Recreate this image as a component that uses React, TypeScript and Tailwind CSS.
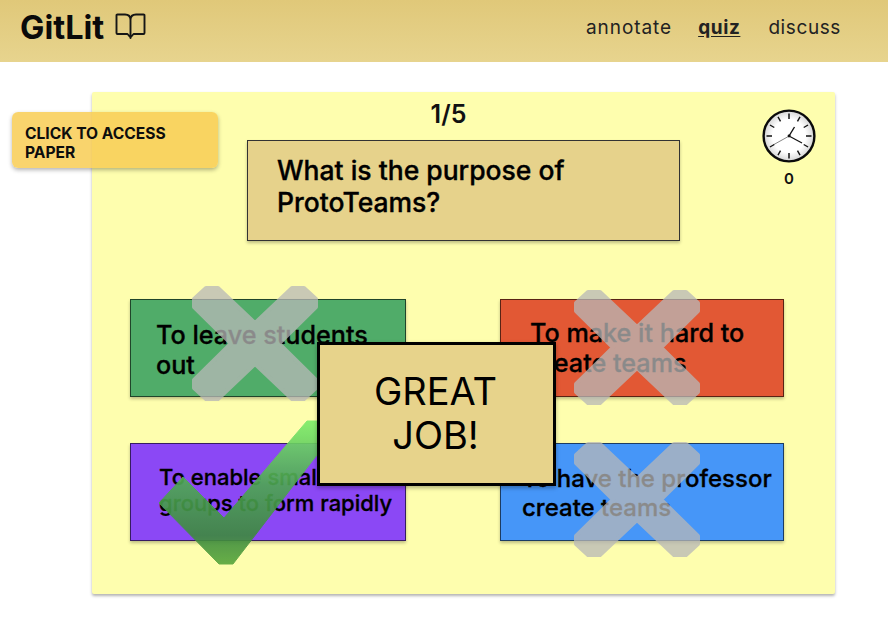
const inter = "font-['Inter','Liberation_Sans',sans-serif]";

function CrossMark({ className }: { className: string }) {
  return (
    <svg className={className} width="126" height="115" viewBox="0 0 126 115" aria-hidden="true">
      <path
        d="M2 13 L14 2 H26 L63 37 L100 2 H112 L124 13 V21 L87 57.5 L124 94 V102 L112 113 H100 L63 78 L26 113 H14 L2 102 V94 L39 57.5 L2 21 Z"
        fill="#b8b8b8"
        stroke="#b8b8b8"
        strokeWidth="4"
        strokeLinejoin="round"
      />
    </svg>
  );
}

function CheckMark({ className }: { className: string }) {
  return (
    <svg className={className} width="190" height="146" viewBox="0 0 190 146" aria-hidden="true">
      <defs>
        <linearGradient id="chk" x1="0" y1="0" x2="0" y2="1">
          <stop offset="0" stopColor="#7bec69" />
          <stop offset="0.45" stopColor="#4da752" />
          <stop offset="0.8" stopColor="#3d8a3e" />
          <stop offset="1" stopColor="#58a63c" />
        </linearGradient>
      </defs>
      <path d="M149 1 H185 L75 144 H61 L1 83 L25 57 L66 98 Z" fill="url(#chk)" stroke="url(#chk)" strokeWidth="1" strokeLinejoin="round" />
    </svg>
  );
}

function Clock() {
  const ticks = Array.from({ length: 12 }, (_, i) => i * 30);
  return (
    <svg width="54" height="54" viewBox="0 0 54 54" aria-hidden="true">
      <defs>
        <radialGradient id="face" cx="0.5" cy="0.5" r="0.5">
          <stop offset="0.65" stopColor="#ffffff" />
          <stop offset="1" stopColor="#d4d4d4" />
        </radialGradient>
      </defs>
      <circle cx="27" cy="27" r="25.4" fill="url(#face)" stroke="#0a0a0a" strokeWidth="2.4" />
      {ticks.map((a) => (
        <line
          key={a}
          x1="27"
          y1={a % 90 === 0 ? 4.5 : 5}
          x2="27"
          y2="10"
          stroke="#111"
          strokeWidth={a % 90 === 0 ? 1.5 : 1.4}
          transform={`rotate(${a} 27 27)`}
        />
      ))}
      <line x1="27" y1="27" x2="32.5" y2="18" stroke="#111" strokeWidth="1.4" />
      <line x1="27" y1="27" x2="40" y2="34" stroke="#111" strokeWidth="1.2" />
      <line x1="29" y1="26" x2="11" y2="36" stroke="#333" strokeWidth="0.6" />
      <circle cx="27" cy="27" r="1.4" fill="#111" />
    </svg>
  );
}

function BookIcon() {
  return (
    <svg className="mb-[3px]" width="31" height="27" viewBox="0 0 31 27" fill="none" aria-hidden="true">
      <path
        d="M1.5 2.5 Q1.5 1.5 2.5 1.5 H10 Q15.5 1.5 15.5 7 V25 M29.5 2.5 Q29.5 1.5 28.5 1.5 H21 Q15.5 1.5 15.5 7 M1.5 2.5 V20 Q1.5 21 2.5 21 H12.5 L15.5 24.5 L18.5 21 H28.5 Q29.5 21 29.5 20 V2.5"
        stroke="#161616"
        strokeWidth="1.9"
        strokeLinecap="round"
        strokeLinejoin="round"
      />
    </svg>
  );
}

const answerBase = "h-[98px] border border-black/60 shadow-[0_2px_3px_rgba(0,0,0,0.25)] font-medium [-webkit-text-stroke:0.3px_black] text-black";

export default function App() {
  return (
    <div className={`${inter} relative w-[888px] h-[624px] bg-white overflow-hidden`}>
      <header className="h-[62px] flex items-center justify-between pl-5 pr-[47px] pb-[6px] bg-gradient-to-b from-[#e0c879] to-[#e7d48e]">
        <div className="flex items-center gap-[11px]">
          <span className="text-[32.5px] leading-none font-bold text-[#0a0a0a]">GitLit</span>
          <BookIcon />
        </div>
        <nav className="flex items-center gap-[26px] text-[19px] tracking-[0.6px] text-[#222]">
          <span className="tracking-[0.95px]">annotate</span>
          <span className="font-bold underline underline-offset-2">quiz</span>
          <span className="ml-[2px]">discuss</span>
        </nav>
      </header>

      <main className="pt-[30px] pl-[92px]">
        <section className="relative w-[743px] h-[502px] bg-[#fefeae] rounded-[2px] shadow-[0_2px_3px_rgba(0,0,0,0.3)] pt-[8px]">
          <div className="w-[713px] text-center text-[25px] leading-[29px] font-semibold text-[#111]">1/5</div>

          <div className="absolute right-[19px] top-[17px] flex flex-col items-center">
            <Clock />
            <span className="text-[15px] leading-[18px] mt-[7px] font-semibold text-[#111]">0</span>
          </div>

          <div className="ml-[155px] mt-[11px] w-[433px] h-[101px] bg-[#e6d28b] border border-[#333] shadow-[0_2px_3px_rgba(0,0,0,0.25)] pl-[29px] pt-[14px] text-[26.5px] leading-[31.5px] font-medium [-webkit-text-stroke:0.35px_black] text-black">
            What is the purpose of
            <br />
            ProtoTeams?
          </div>

          <div className="ml-[38px] mt-[58px] w-[654px] grid grid-cols-[276px_284px] justify-between gap-y-[46px]">
            <div className={`${answerBase} bg-[#50ac69] pl-[25px] pt-[20px] text-[25.2px] leading-[30px]`}>
              To leave students
              <br />
              out
            </div>
            <div className={`${answerBase} bg-[#e25834] pl-[29px] pt-[18px] text-[25.2px] leading-[30px]`}>
              To make it hard to
              <br />
              create teams
            </div>
            <div className={`${answerBase} bg-[#8b48f5] pl-[28px] pt-[20px] text-[22px] leading-[26px]`}>
              To enable small
              <br />
              groups to form rapidly
            </div>
            <div className={`${answerBase} bg-[#4696f8] pl-[21px] pt-[20px] text-[24px] leading-[29px]`}>
              To have the professor
              <br />
              create teams
            </div>
          </div>
        </section>
      </main>

      <button className="absolute left-3 top-[112px] w-[206px] h-[56px] rounded-md bg-[#f8cd54]/85 shadow-[0_2px_4px_rgba(0,0,0,0.3)] pl-[13px] pt-[6px] text-left text-[15.6px] leading-[19px] font-bold text-[#0d0d0d]">
        CLICK TO ACCESS
        <br />
        PAPER
      </button>

      <CrossMark className="absolute left-[192px] top-[286px] opacity-75" />
      <CrossMark className="absolute left-[574px] top-[290px] opacity-75" />
      <CrossMark className="absolute left-[574px] top-[442px] opacity-75" />
      <CheckMark className="absolute left-[158px] top-[420px] opacity-90" />

      <div className="absolute left-[317px] top-[342px] w-[239px] h-[144px] bg-[#e7d38b] border-[3px] border-black shadow-[0_2px_4px_rgba(0,0,0,0.3)] pt-[24px] pr-[2px] text-center text-[38px] leading-[44px] text-black">
        GREAT
        <br />
        JOB!
      </div>
    </div>
  );
}
